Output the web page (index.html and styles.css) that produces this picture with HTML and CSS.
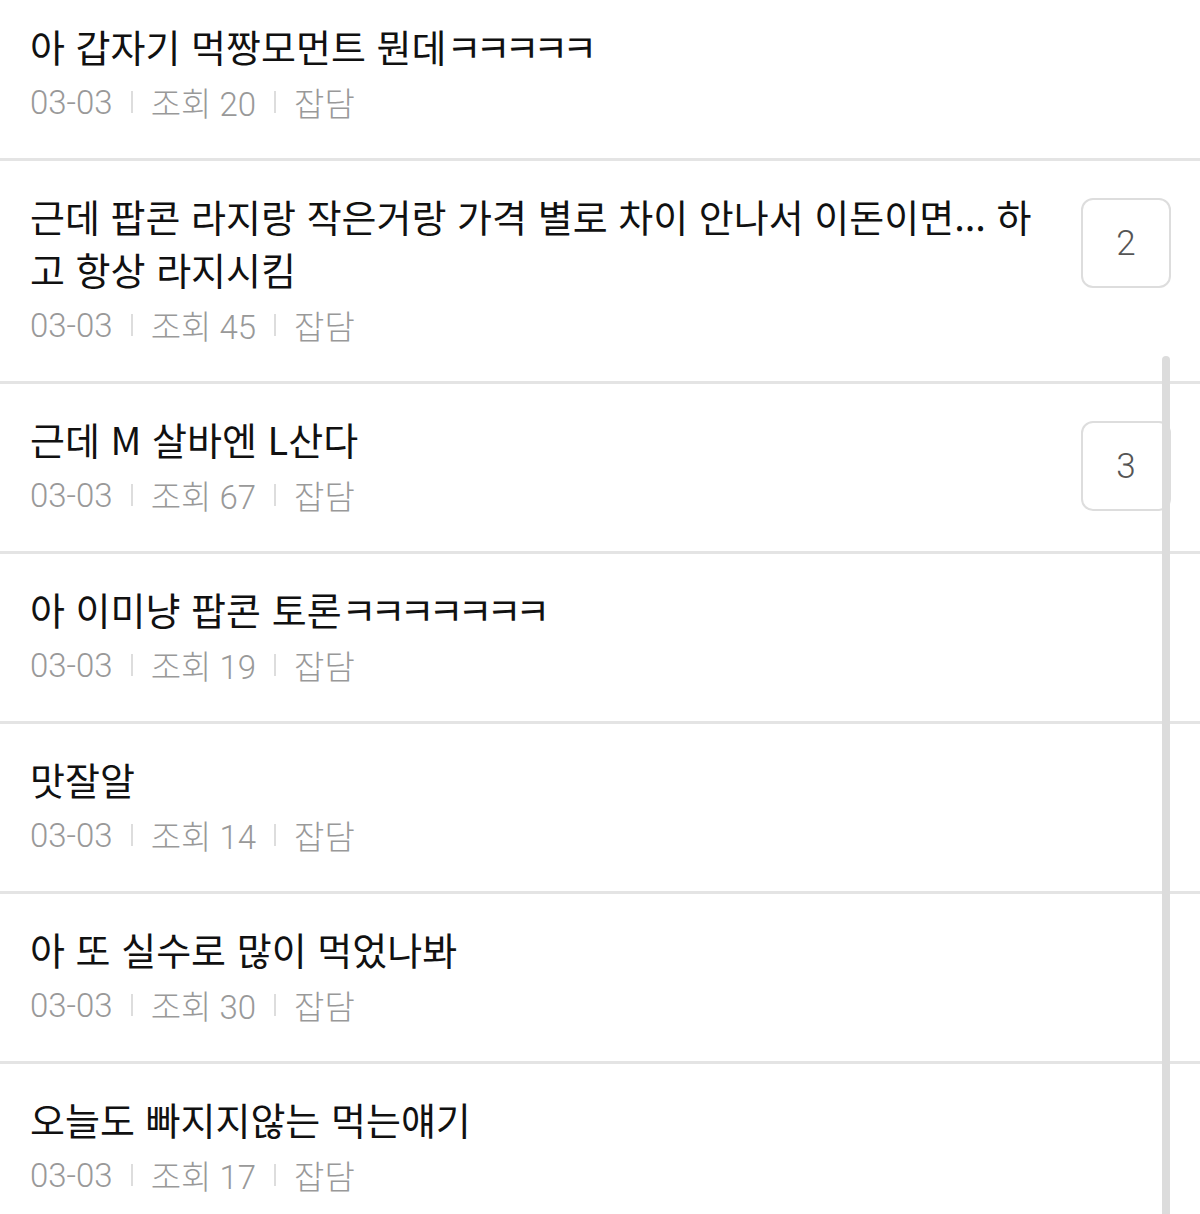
FILE: index.html
```html
<!DOCTYPE html>
<html lang="ko">
<head>
    <meta charset="UTF-8">
    <meta name="viewport" content="width=device-width, initial-scale=1.0">
    <title>잡담</title>
    <link rel="stylesheet" href="styles.css">
</head>
<body>
    <ul class="post-list">
        <li class="post">
            <div class="post-body">
                <p class="post-title">아 갑자기 먹짱모먼트 뭔데<span class="laugh">ㅋㅋㅋㅋㅋ</span></p>
                <div class="post-meta"><span>03-03</span><span class="sep"></span><span>조회 20</span><span class="sep"></span><span>잡담</span></div>
            </div>
        </li>
        <li class="post">
            <div class="post-body">
                <p class="post-title">근데 팝콘 라지랑 작은거랑 가격 별로 차이 안나서 이돈이면... 하고 항상 라지시킴</p>
                <div class="post-meta"><span>03-03</span><span class="sep"></span><span>조회 45</span><span class="sep"></span><span>잡담</span></div>
            </div>
            <div class="comment-count">2</div>
        </li>
        <li class="post">
            <div class="post-body">
                <p class="post-title">근데 M 살바엔 L산다</p>
                <div class="post-meta"><span>03-03</span><span class="sep"></span><span>조회 67</span><span class="sep"></span><span>잡담</span></div>
            </div>
            <div class="comment-count">3</div>
        </li>
        <li class="post">
            <div class="post-body">
                <p class="post-title">아 이미냥 팝콘 토론<span class="laugh">ㅋㅋㅋㅋㅋㅋㅋ</span></p>
                <div class="post-meta"><span>03-03</span><span class="sep"></span><span>조회 19</span><span class="sep"></span><span>잡담</span></div>
            </div>
        </li>
        <li class="post">
            <div class="post-body">
                <p class="post-title">맛잘알</p>
                <div class="post-meta"><span>03-03</span><span class="sep"></span><span>조회 14</span><span class="sep"></span><span>잡담</span></div>
            </div>
        </li>
        <li class="post">
            <div class="post-body">
                <p class="post-title">아 또 실수로 많이 먹었나봐</p>
                <div class="post-meta"><span>03-03</span><span class="sep"></span><span>조회 30</span><span class="sep"></span><span>잡담</span></div>
            </div>
        </li>
        <li class="post">
            <div class="post-body">
                <p class="post-title">오늘도 빠지지않는 먹는얘기</p>
                <div class="post-meta"><span>03-03</span><span class="sep"></span><span>조회 17</span><span class="sep"></span><span>잡담</span></div>
            </div>
        </li>
    </ul>
    <div class="scroll-thumb"></div>
</body>
</html>
```

FILE: styles.css
```css
body {
    font-family: "Noto Sans CJK KR", "Noto Sans", sans-serif;
    background-color: #fff;
    color: #000;
    margin: 0;
    padding: 0;
    overflow: hidden;
}

.post-list {
    list-style: none;
    margin: -9px 0 0 0;
    padding: 0;
}

.post {
    display: flex;
    align-items: flex-start;
    justify-content: space-between;
    gap: 40px;
    padding: 28px 29px 36px 30px;
    border-bottom: 3px solid #e4e4e4;
}

.post-body {
    flex: 1;
    min-width: 0;
}

.post-title {
    margin: 0;
    font-size: 38px;
    line-height: 53px;
    color: #111;
}

.post-title .laugh {
    letter-spacing: -6px;
}

.post-meta {
    display: flex;
    align-items: center;
    height: 40px;
    margin-top: 10px;
    font-family: "Roboto", "Noto Sans CJK KR", sans-serif;
    font-weight: 300;
    font-size: 33px;
    color: #999;
}

.post-meta .sep {
    width: 2px;
    height: 22px;
    margin: 0 18px;
    background-color: #ddd;
}

.comment-count {
    flex: none;
    width: 86px;
    height: 86px;
    margin-top: 9px;
    border: 2px solid #ddd;
    border-radius: 12px;
    display: flex;
    align-items: center;
    justify-content: center;
    font-family: "Roboto", sans-serif;
    font-weight: 300;
    font-size: 35px;
    color: #555;
}

.scroll-thumb {
    position: absolute;
    left: 1162px;
    top: 356px;
    width: 8px;
    height: 900px;
    border-radius: 4px;
    background-color: #dcdcdc;
}
```
